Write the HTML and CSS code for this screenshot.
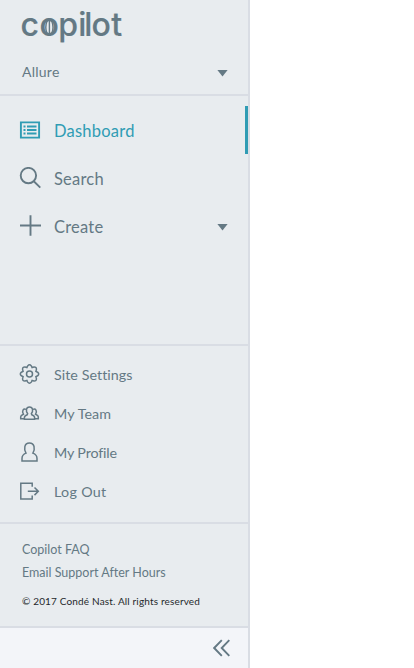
FILE: index.html
```html
<!DOCTYPE html>
<html lang="en">
<head>
<meta charset="utf-8">
<title>Copilot</title>
<link rel="stylesheet" href="styles.css">
</head>
<body>
<aside class="sidebar">
  <header class="brand">
    <svg class="logo" width="110" height="40" viewBox="0 0 110 40" role="img" aria-label="copilot">
      <text class="logo-text" y="29" x="-1.4 17.6 36.2 56.2 62.2 69.4 89.2">copilot</text>
      <g class="logo-mark"><ellipse cx="27.4" cy="20.2" rx="3.6" ry="7.8"/><path d="M27.4 12.5v15.5"/></g>
    </svg>
    <div class="site"><span class="site-name">Allure</span><i class="caret"></i></div>
  </header>
  <nav class="primary">
    <a class="item active"><svg width="22" height="22" viewBox="0 0 22 22"><path d="M1.9 3.4h18.2v15.2H1.9z"/><path d="M4.5 7.5h2M8 7.5h9.5M4.5 11h2M8 11h9.5M4.5 14.5h2M8 14.5h9.5"/></svg><span class="dashboard">Dashboard</span></a>
    <a class="item"><svg width="22" height="22" viewBox="0 0 22 22"><circle cx="9.4" cy="8.6" r="7.7"/><path d="M14.8 14.2 21.3 20.6"/></svg><span class="search">Search</span></a>
    <a class="item"><svg width="22" height="22" viewBox="0 0 22 22"><path d="M11.5 .2v20.6M1 10.5h21"/></svg><span class="create">Create</span><i class="caret"></i></a>
  </nav>
  <nav class="secondary">
    <a class="item"><svg width="22" height="22" viewBox="0 0 22 22"><path d="M8.7 2.9Q10.5.7 12.3 2.9L13.1 4.6 14.8 4Q17.7 3.8 17.4 6.6L16.9 8.4 18.6 9.2Q20.8 11 18.6 12.8L16.9 13.6 17.4 15.4Q17.7 18.2 14.8 18L13.1 17.4 12.3 19.1Q10.5 21.3 8.7 19.1L7.9 17.4 6.2 18Q3.3 18.2 3.6 15.4L4.1 13.6 2.4 12.8Q.2 11 2.4 9.2L4.1 8.4 3.6 6.6Q3.3 3.8 6.2 4L7.9 4.6z"/><circle cx="10.5" cy="11" r="3"/></svg><span class="settings">Site Settings</span></a>
    <a class="item"><svg width="22" height="22" viewBox="0 0 22 22"><path d="M5.4 17.3v-1.7c0-1.5 1-2.2 2.8-2.8l.4-1.2c-1.8-2-1.8-6.7 1.9-6.7s3.7 4.7 1.9 6.7l.4 1.2c1.8.6 2.8 1.3 2.8 2.8v1.7z"/><path d="M7 7.4C4.4 6.2 2.5 9 4.4 12.2c-1.7.7-2.7 1.2-2.7 2.6v1.9h3.7M14 7.4c2.6-1.2 4.5 1.6 2.6 4.8 1.7.7 2.7 1.2 2.7 2.6v1.9h-3.7"/></svg><span class="team">My Team</span></a>
    <a class="item"><svg width="22" height="22" viewBox="0 0 22 22"><path d="M3 19.9v-2.5c0-3.2 1.5-4.3 4-5.3C4.7 8.1 5.1 2 10.4 2s5.9 6.1 3.5 10.1c2.6 1 4.1 2.1 4.1 5.3v2.5z"/></svg><span class="profile">My Profile</span></a>
    <a class="item"><svg width="22" height="22" viewBox="0 0 22 22"><path d="M13.2 6.7V3.3H1.8v15.6h11.4v-3.4M8.8 11.3h10.5M15.5 7.5l3.8 3.8-3.8 3.8"/></svg><span class="logout">Log Out</span></a>
  </nav>
  <section class="info">
    <a class="faq"><span>Copilot FAQ</span></a>
    <a class="support"><span>Email Support After Hours</span></a>
    <small class="copyright"><span>© 2017 Condé Nast. All rights reserved</span></small>
  </section>
  <footer class="collapse"><svg width="18" height="18" viewBox="0 0 18 18"><path d="M8.8 1.2 1.2 9l7.6 7.8M16.3 1.2 8.7 9l7.6 7.8"/></svg></footer>
</aside>
</body>
</html>
```
FILE: styles.css
```css
* { box-sizing: border-box; }
body { margin: 0; background: #fff; font-family: Lato, "Liberation Sans", sans-serif; font-variant-ligatures: none; color: #647984; }
.sidebar { width: 250px; height: 668px; display: flex; flex-direction: column; background: #e8ecef; border-right: 2px solid #d9dde4; }
svg { display: block; flex: none; fill: none; stroke: currentColor; stroke-width: 1.9; }
.brand { height: 96px; padding: 7px 20px 0 22px; border-bottom: 2px solid #d9dde4; }
.logo { overflow: visible; }
.logo-text { font: 500 32px Inter, sans-serif; fill: #647984; stroke: #647984; stroke-width: .2; }
.logo-mark { stroke-width: 1.4; }
.site { display: flex; align-items: center; justify-content: space-between; height: 20px; margin-top: 15px; font-size: 14px; line-height: 20px; letter-spacing: .25px; }
.caret { width: 11px; height: 7px; margin-left: auto; margin-top: 2px; background: currentColor; clip-path: polygon(0 0, 100% 0, 50% 100%); }
.primary { height: 250px; padding-top: 10px; border-bottom: 2px solid #d9dde4; font-size: 16.5px; letter-spacing: .22px; }
.item { display: flex; align-items: center; padding: 0 20px 0 19px; }
.item span { margin-left: 13px; padding-top: 1px; }
.primary .item { height: 48px; }
.primary .active { color: #309cb4; border-right: 3px solid #309cb4; }
.secondary { height: 178px; padding-top: 8px; border-bottom: 2px solid #d9dde4; font-size: 14.3px; letter-spacing: .1px; }
.secondary .item { height: 39px; }
.secondary svg { stroke-width: 1.5; }
.settings { letter-spacing: .05px; }
.logout { letter-spacing: .3px; }
.profile { letter-spacing: -.15px; }
.info { display: flex; flex-direction: column; height: 104px; padding: 14px 0 0 22px; border-bottom: 2px solid #d9dde4; font-size: 12.5px; line-height: 23px; }
.copyright { margin-top: 6px; font-size: 10px; letter-spacing: .16px; color: #25292c; }
.collapse { display: flex; flex: 1; align-items: center; justify-content: flex-end; padding-right: 17px; background: #f3f5f9; }
```
